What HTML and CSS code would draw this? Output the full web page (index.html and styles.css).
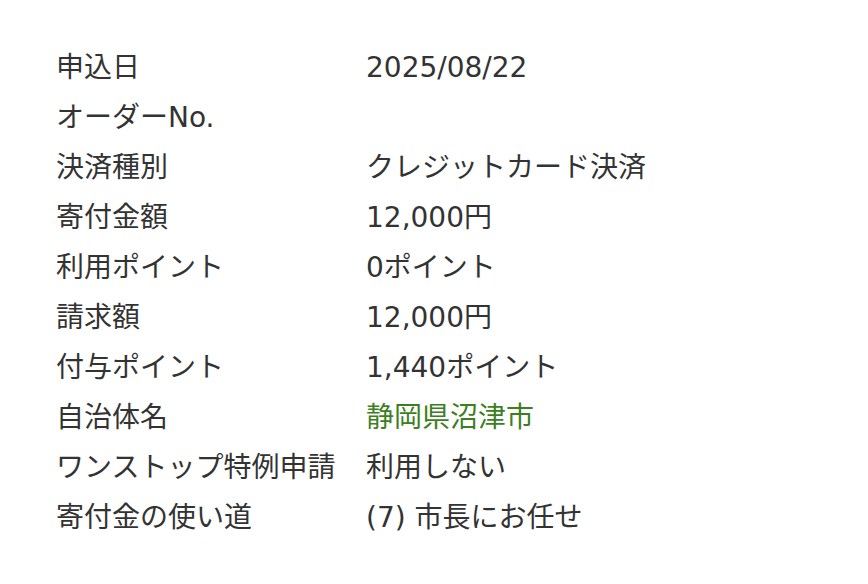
FILE: index.html
```html
<!DOCTYPE html>
<html lang="ja">
<head>
<meta charset="utf-8">
<link rel="stylesheet" href="styles.css">
</head>
<body>
<dl class="order">
  <dt>申込日</dt><dd>2025/08/22</dd>
  <dt>オーダーNo.</dt><dd></dd>
  <dt>決済種別</dt><dd>クレジットカード決済</dd>
  <dt>寄付金額</dt><dd>12,000円</dd>
  <dt>利用ポイント</dt><dd>0ポイント</dd>
  <dt>請求額</dt><dd>12,000円</dd>
  <dt>付与ポイント</dt><dd>1,440ポイント</dd>
  <dt>自治体名</dt><dd class="city">静岡県沼津市</dd>
  <dt>ワンストップ特例申請</dt><dd>利用しない</dd>
  <dt>寄付金の使い道</dt><dd>(7) 市長にお任せ</dd>
</dl>
</body>
</html>
```
FILE: styles.css
```css
html, body {
  margin: 0;
  padding: 0;
  background: #fff;
}
body {
  font-family: "DejaVu Sans", "Noto Sans CJK JP", sans-serif;
  color: #333;
  font-size: 28px;
}
.order {
  margin: 0;
  padding: 43px 0 0 56px;
  display: grid;
  grid-template-columns: 310px 1fr;
  grid-auto-rows: 50px;
  line-height: 50px;
}
.order dt, .order dd {
  margin: 0;
  white-space: nowrap;
}
.order .city {
  color: #3d7f1f;
}
```
